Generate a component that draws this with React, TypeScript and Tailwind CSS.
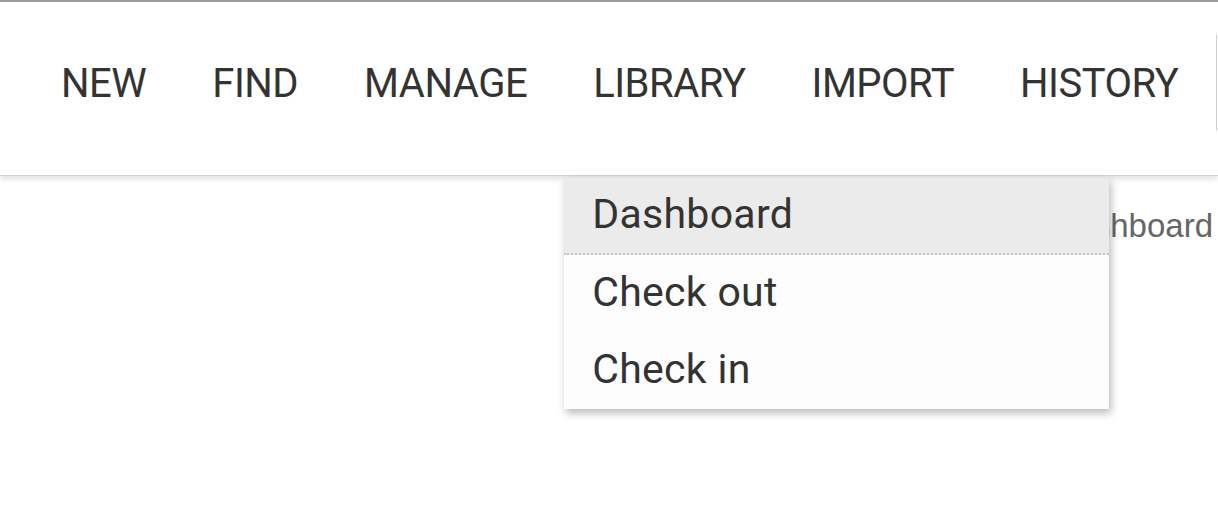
import { useState } from 'react';

const navItems = ['NEW', 'FIND', 'MANAGE', 'LIBRARY', 'IMPORT', 'HISTORY'];

const libraryMenu = ['Dashboard', 'Check out', 'Check in'];

export default function App() {
  const [openMenu] = useState('LIBRARY');
  const [activeItem] = useState('Dashboard');

  return (
    <div className="min-h-screen bg-white" style={{ fontFamily: 'Roboto, "Liberation Sans", sans-serif' }}>
      <header className="relative z-10 flex h-[176px] items-center border-t-2 border-b border-t-[#9b9b9b] border-b-[#d4d4d4] bg-white shadow-[0_3px_6px_rgba(0,0,0,0.12)]">
        <nav className="mb-[10px] flex pl-[28px]">
          {navItems.map((item) => (
            <div className="relative" key={item}>
              <button
                className="px-[33px] text-[40px] leading-none tracking-[-0.5px] text-[#333333]"
                type="button"
              >
                {item}
              </button>
              {openMenu === item ? (
                <ul className="absolute left-[4px] top-[114px] z-20 w-[545px] bg-[#fdfdfd] shadow-[2px_4px_8px_rgba(0,0,0,0.28)]">
                  {libraryMenu.map((entry, index) => (
                    <li
                      className={`flex h-[77px] items-center pl-[28px] text-[41px] tracking-[0.3px] text-[#333333] ${
                        entry === activeItem ? 'bg-[#ebebeb]' : ''
                      } ${index === 0 ? 'border-b-2 border-dotted border-b-[#c4c4c4]' : ''}`}
                      key={entry}
                    >
                      {entry}
                    </li>
                  ))}
                </ul>
              ) : null}
            </div>
          ))}
        </nav>
        <div className="ml-auto mt-[-12px] h-[96px] w-[2px] border-l border-[#cfcfcf]" />
      </header>

      <div className="flex justify-end pr-[5px] pt-[25px]">
        <p className="text-[33px] text-[#666666]" style={{ fontFamily: '"Liberation Sans", Arial, sans-serif' }}>
          Dashboard
        </p>
      </div>
    </div>
  );
}
